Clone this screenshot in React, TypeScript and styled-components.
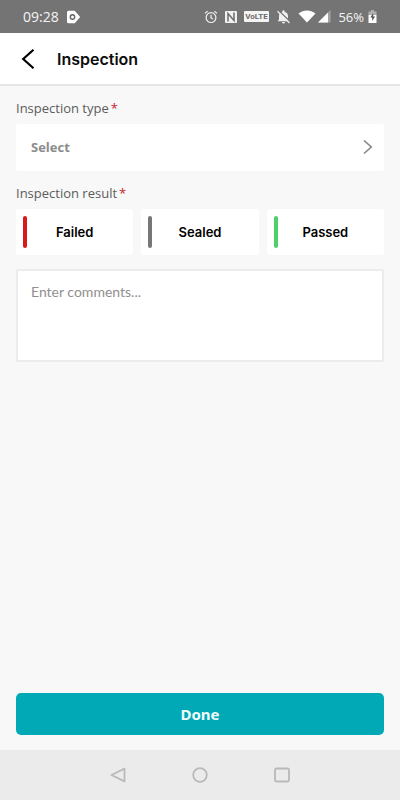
import React, { useState } from "react";
import styled, { createGlobalStyle } from "styled-components";

const GlobalStyle = createGlobalStyle`
  *, *::before, *::after { box-sizing: border-box; }
  body { margin: 0; background: #f8f8f8; font-family: Inter, sans-serif; }
  button, textarea { font: inherit; border: 0; padding: 0; }
`;

const Screen = styled.div`
  min-height: 100vh;
  display: flex;
  flex-direction: column;
  background: #f8f8f8;
`;

const StatusBar = styled.div`
  height: 33px;
  padding: 0 23px;
  display: flex;
  align-items: center;
  justify-content: space-between;
  background: #747474;
  color: #f4f4f4;
  font: 14px/20px "Open Sans", sans-serif;
`;

const StatusGroup = styled.div<{ $gap: number }>`
  display: flex;
  align-items: center;
  gap: ${(p) => p.$gap}px;
  svg { display: block; }
`;

const Percent = styled.span`
  font-size: 13px;
`;

const Header = styled.header`
  height: 53px;
  padding: 0 16px 0 20px;
  display: flex;
  align-items: center;
  gap: 20px;
  background: #fff;
  border-bottom: 2px solid #e6e6e6;
`;

const IconButton = styled.button`
  display: flex;
  background: none;
  color: #000;
  cursor: pointer;
`;

const Title = styled.h1`
  margin: 0;
  font-size: 16px;
  line-height: 24px;
  font-weight: 600;
  color: #0c0c0c;
`;

const Form = styled.form`
  flex: 1;
  display: flex;
  flex-direction: column;
  padding: 12px 16px 15px;
`;

const Label = styled.div`
  margin-bottom: 6px;
  font: 13px/20px "Open Sans", sans-serif;
  color: #5c5c5c;
`;

const Required = styled.span`
  margin-left: 2px;
  color: #c8202c;
`;

const SelectButton = styled.button`
  height: 47px;
  margin-bottom: 12px;
  padding: 0 10px 2px 15px;
  display: flex;
  align-items: center;
  justify-content: space-between;
  background: #fff;
  border-radius: 2px;
  color: #8c8c8c;
  font: 700 13px/20px "Open Sans", sans-serif;
  cursor: pointer;
`;

const Results = styled.div`
  display: grid;
  grid-template-columns: repeat(3, 1fr);
  gap: 8px;
  margin-bottom: 14px;
`;

const ResultButton = styled.button<{ $color: string }>`
  height: 46px;
  padding: 7px 11px 7px 7px;
  display: flex;
  align-items: center;
  background: #fff;
  border-radius: 3px;
  color: #000;
  font-size: 13px;
  line-height: 20px;
  font-weight: 600;
  cursor: pointer;

  &::before {
    content: "";
    width: 4px;
    height: 32px;
    border-radius: 2px;
    background: ${(p) => p.$color};
  }
`;

const ResultText = styled.span`
  flex: 1;
  text-align: center;
`;

const Comments = styled.textarea`
  height: 93px;
  padding: 11px 13px;
  border: 2px solid #ececec;
  border-radius: 2px;
  background: #fff;
  color: #333;
  font: 14px/20px Lato, sans-serif;
  resize: none;
  &::placeholder { color: #8f8f8f; opacity: 1; }
`;

const DoneButton = styled.button`
  height: 42px;
  margin-top: auto;
  border-radius: 5px;
  background: #00a9b5;
  color: #f2fcfc;
  font: 700 15px/20px "Noto Sans", sans-serif;
  cursor: pointer;
`;

const NavBar = styled.nav`
  height: 50px;
  display: flex;
  align-items: center;
  justify-content: center;
  gap: 64px;
  background: #ebebeb;
  button { color: #b9b9b9; }
`;

const results = [
  { name: "Failed", color: "#d71a1a" },
  { name: "Sealed", color: "#777777" },
  { name: "Passed", color: "#4bd166" },
];

function StatusIcons() {
  return (
    <>
      <svg width="14" height="14" viewBox="0 0 14 14" fill="none" stroke="#f0f0f0" strokeWidth="1.2">
        <circle cx="7" cy="7.6" r="4.9" />
        <path d="M7 4.800v3l2 1.200M1 3.400l2.600-2.200M13 3.400l-2.600-2.200" />
      </svg>
      <svg width="12" height="12" viewBox="0 0 12 12">
        <rect width="12" height="12" rx="1" fill="#f0f0f0" />
        <path d="M3 10.500V2.500L9 9.500V1.500" fill="none" stroke="#6c6c6c" strokeWidth="1.500" />
      </svg>
      <svg width="25" height="11" viewBox="0 0 25 11">
        <rect width="25" height="11" rx="1" fill="#f4f4f4" />
        <text x="12.5" y="8.400" textAnchor="middle" fontFamily="Roboto, sans-serif" fontSize="8" fontWeight="700" fill="#6a6a6a">VoLTE</text>
      </svg>
      <svg width="15" height="14" viewBox="0 0 15 14">
        <path d="M1.500 11.200h12L12 9.500V6C12 3.800 10.600 2.400 8.700 2v-.5a1.200 1.200 0 0 0-2.400 0V2C4.400 2.400 3 3.800 3 6v3.500zM6 12h3a1.500 1.500 0 0 1-3 0z" fill="#f0f0f0" />
        <path d="M2.800.8L14.500 12" stroke="#747474" strokeWidth="1.400" />
        <path d="M1.500 1.200L13.500 13" stroke="#f0f0f0" strokeWidth="1.200" />
      </svg>
    </>
  );
}

function SignalIcons() {
  return (
    <>
      <svg width="18" height="13" viewBox="0 0 18 13">
        <path d="M.5 3.600C5.500-.6 12.500-.6 17.500 3.600L9 12.500z" fill="#fff" />
      </svg>
      <svg width="13" height="13" viewBox="0 0 13 13">
        <path d="M0 12.500L12.500 0v12.500z" fill="#a2a2a2" />
        <path d="M0 12.500L10 2.500v10z" fill="#fff" />
      </svg>
    </>
  );
}

export default function App() {
  const [result, setResult] = useState("");
  return (
    <>
      <GlobalStyle />
      <Screen>
        <StatusBar>
          <StatusGroup $gap={7}>
            <span>09:28</span>
            <svg width="15" height="14" viewBox="0 0 15 14">
              <path d="M2.500.8h6.200l5.500 6.200-5.500 6.200H2.500Q1 13.200 1 11.700V2.300Q1 .8 2.500.8z" fill="#fff" />
              <circle cx="6.500" cy="7" r="2.200" fill="none" stroke="#666" strokeWidth="1.400" />
            </svg>
          </StatusGroup>
          <StatusGroup $gap={7}>
            <StatusGroup $gap={7}><StatusIcons /></StatusGroup>
            <StatusGroup $gap={2}><SignalIcons /></StatusGroup>
            <StatusGroup $gap={4}>
              <Percent>56%</Percent>
              <svg width="9" height="13" viewBox="0 0 9 13">
                <path d="M3 0h3v1.500h2.500V5h-8V1.500H3z" fill="#b0b0b0" />
                <path d="M.5 5h8v8h-8z" fill="#fff" />
                <path d="M5.200 3L2.300 7.500h1.900V11l2.900-4.500H5.200z" fill="#555" />
              </svg>
            </StatusGroup>
          </StatusGroup>
        </StatusBar>
        <Header>
          <IconButton type="button" aria-label="Back">
            <svg width="17" height="22" viewBox="0 0 17 22" fill="none" stroke="currentColor" strokeWidth="2.200">
              <path d="M13.500 1.800L3.200 11l10.300 9.200" />
            </svg>
          </IconButton>
          <Title>Inspection</Title>
        </Header>
        <Form onSubmit={(e) => e.preventDefault()}>
          <Label id="type-label">Inspection type<Required>*</Required></Label>
          <SelectButton type="button" aria-labelledby="type-label type-value">
            <span id="type-value">Select</span>
            <svg width="12" height="16" viewBox="0 0 12 16" fill="none" stroke="#868686" strokeWidth="1.600">
              <path d="M2 1.500L9.300 8 2 14.500" />
            </svg>
          </SelectButton>
          <Label id="result-label">Inspection result<Required>*</Required></Label>
          <Results role="group" aria-labelledby="result-label">
            {results.map((r) => (
              <ResultButton key={r.name} type="button" $color={r.color} aria-pressed={result === r.name} onClick={() => setResult(r.name)}>
                <ResultText>{r.name}</ResultText>
              </ResultButton>
            ))}
          </Results>
          <Comments aria-label="Comments" placeholder="Enter comments..." />
          <DoneButton type="submit">Done</DoneButton>
        </Form>
        <NavBar aria-label="System">
          <IconButton type="button" aria-label="System back">
            <svg width="18" height="18" viewBox="0 0 18 18" fill="none" stroke="currentColor" strokeWidth="1.800" strokeLinejoin="round">
              <path d="M15.500 2.600v12.800L2.500 9z" />
            </svg>
          </IconButton>
          <IconButton type="button" aria-label="Home">
            <svg width="18" height="18" viewBox="0 0 18 18" fill="none" stroke="currentColor" strokeWidth="1.800">
              <circle cx="9" cy="9" r="6.800" />
            </svg>
          </IconButton>
          <IconButton type="button" aria-label="Recent apps">
            <svg width="18" height="18" viewBox="0 0 18 18" fill="none" stroke="currentColor" strokeWidth="1.800">
              <rect x="2" y="2.500" width="14" height="13" rx="1.500" />
            </svg>
          </IconButton>
        </NavBar>
      </Screen>
    </>
  );
}
